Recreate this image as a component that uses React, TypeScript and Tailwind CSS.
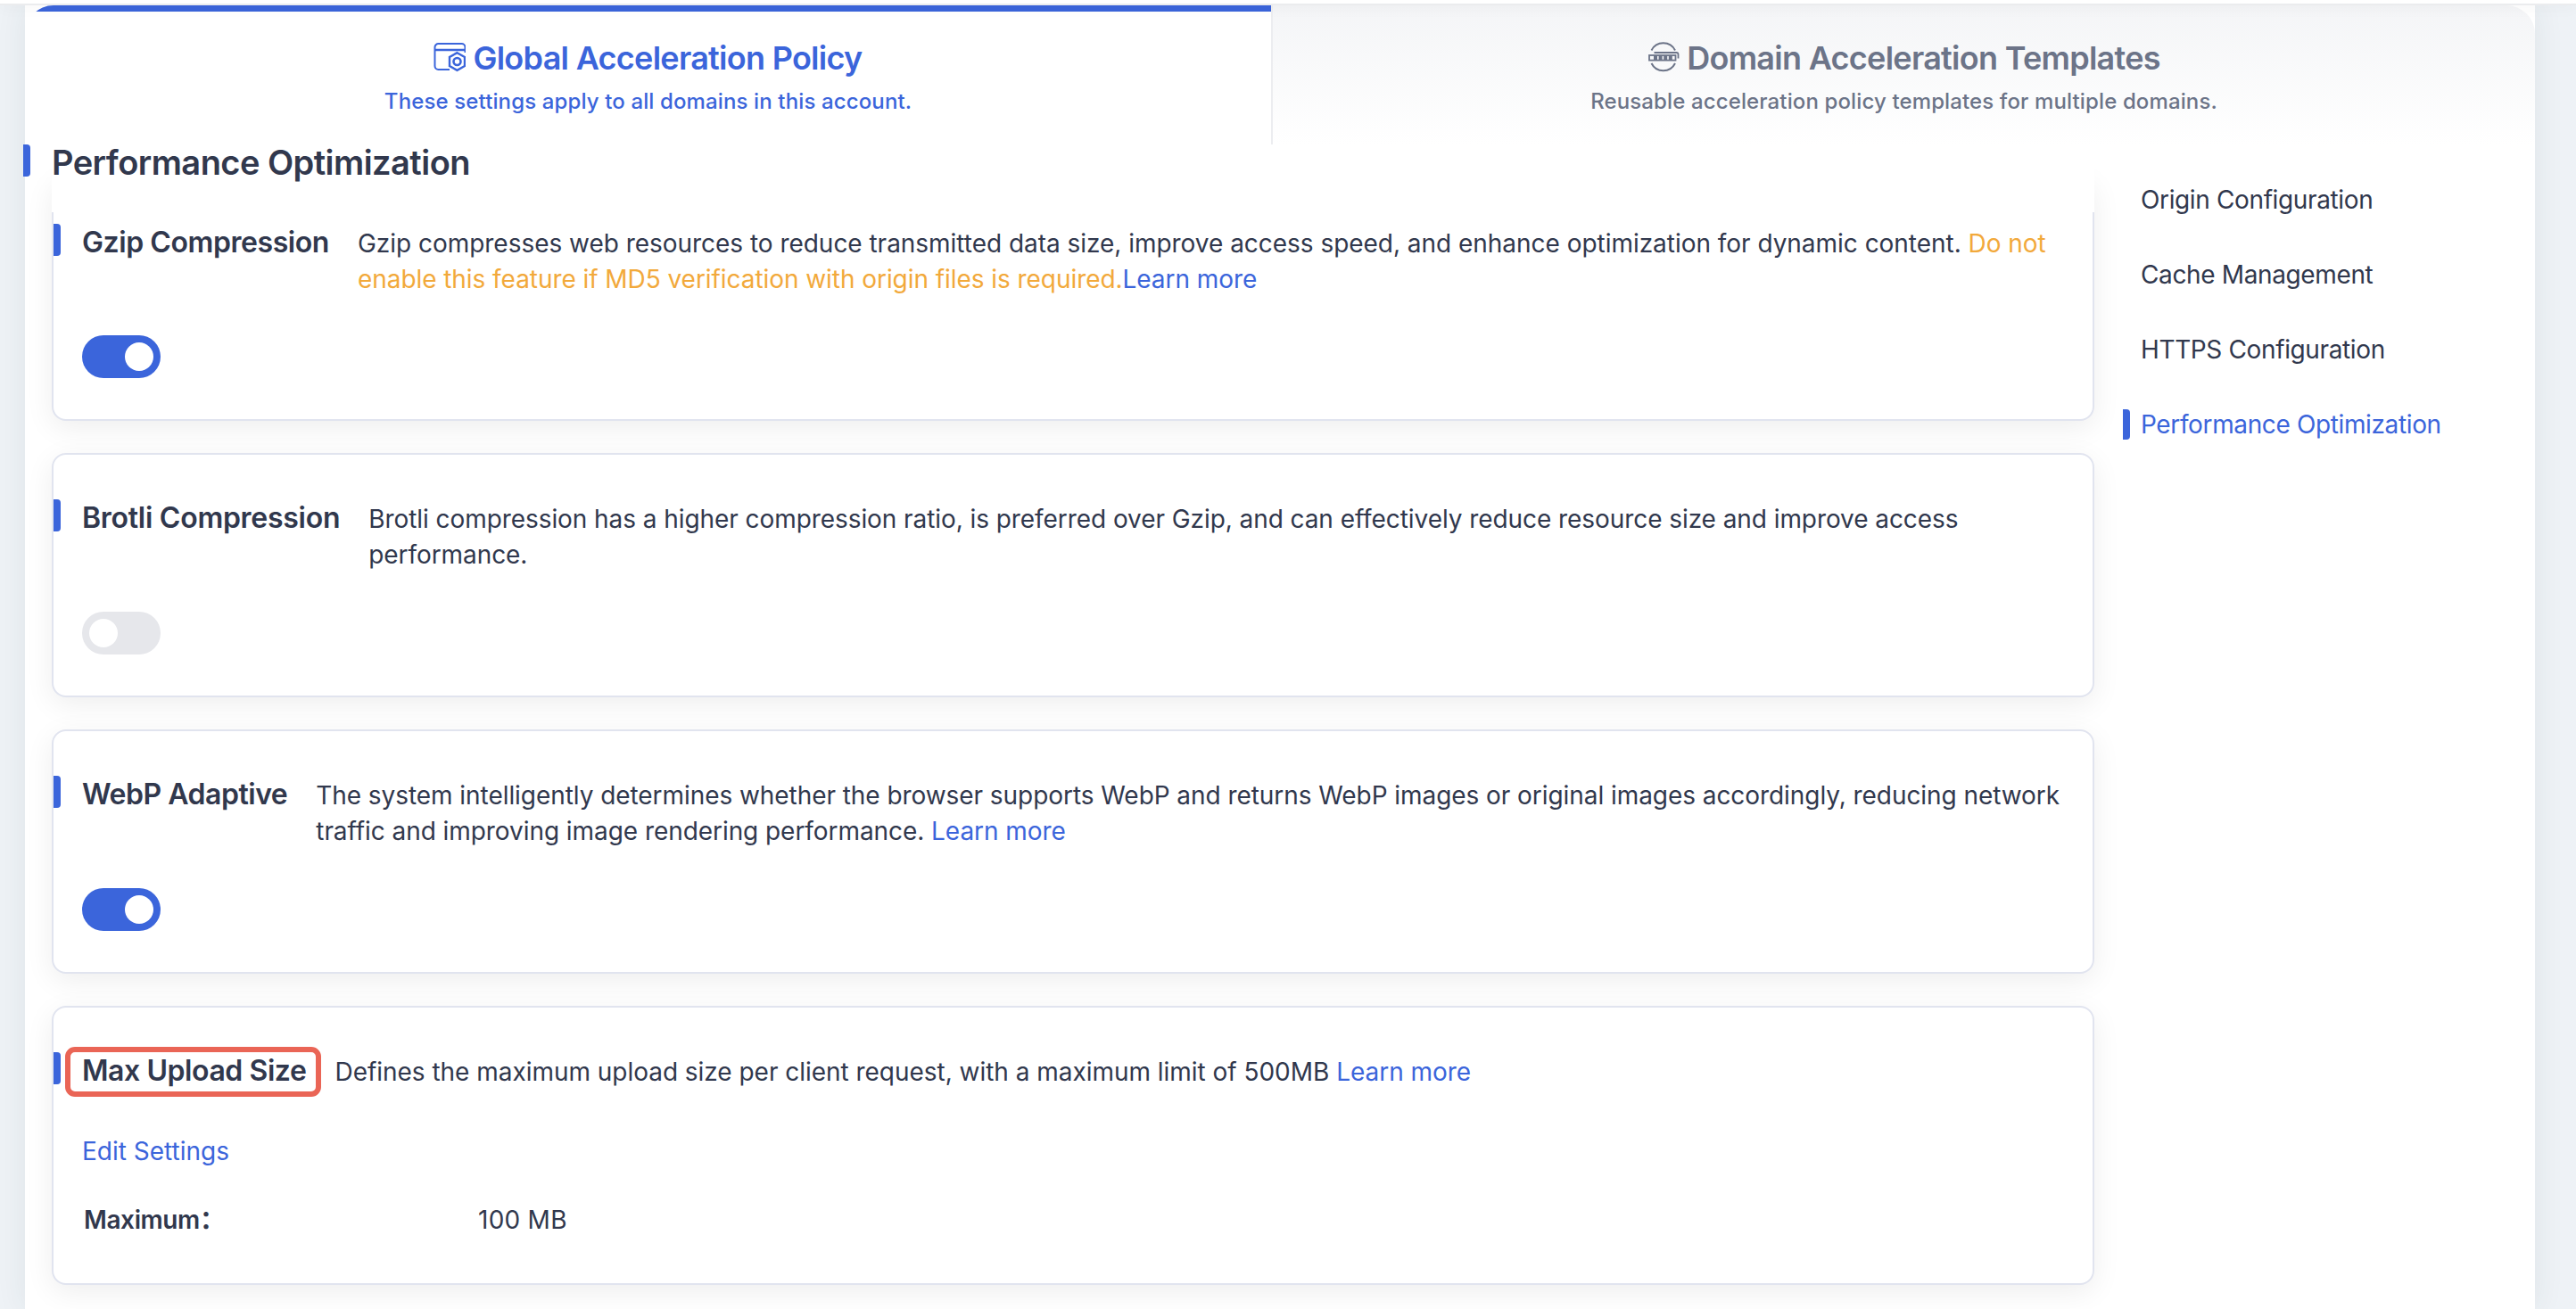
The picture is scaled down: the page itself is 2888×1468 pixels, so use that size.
import type { ReactNode } from "react";

function PolicyIcon() {
  return (
    <svg className="size-[36px]" viewBox="0 0 36 36" fill="none" stroke="currentColor" strokeWidth="2">
      <path d="M18 31H5.500a4 4 0 0 1-4-4V6a4 4 0 0 1 4-4h26a4 4 0 0 1 4 4v6" />
      <path d="M2 9h33" strokeWidth="2.600" />
      <path d="M26.500 12.200 35 17v10l-8.500 4.900L18 27V17z" strokeWidth="2.400" />
      <circle cx="26.500" cy="22" r="4" strokeWidth="2.600" />
    </svg>
  );
}

function TemplateIcon() {
  return (
    <svg className="size-[36px]" viewBox="0 0 36 36" fill="none" stroke="currentColor" strokeWidth="2">
      <path d="M4.500 9.500a14.800 14.800 0 0 1 26.500 0M4.500 24a14.800 14.800 0 0 0 26.500 0" />
      <path d="M7.500 12h25q2 0 2 2v4.500" strokeWidth="1.800" />
      <rect x="2" y="15" width="29.500" height="5.600" strokeWidth="1.800" />
      <path d="M7 17.800h21" strokeWidth="5" strokeDasharray="4 1.600" />
    </svg>
  );
}

function Switch({ checked }: { checked?: boolean }) {
  return (
    <div
      role="switch"
      aria-checked={!!checked}
      className={`mb-[46px] flex h-12 w-[88px] items-center rounded-full px-2 ${checked ? "justify-end bg-[#3b65db]" : "justify-start bg-[#e6e7eb]"}`}
    >
      <div className="size-8 rounded-full bg-white" />
    </div>
  );
}

function Link({ children }: { children: ReactNode }) {
  return <a className="text-[#3b65db]">{children}</a>;
}

type CardProps = {
  title: string;
  titleClass?: string;
  boxed?: boolean;
  desc: ReactNode;
  className: string;
  children: ReactNode;
};

function Card({ title, titleClass = "tracking-[-0.43px]", boxed, desc, className, children }: CardProps) {
  return (
    <section className={`flex flex-col justify-between rounded-2xl border-2 border-[#e1e4ef] bg-white shadow-[0_8px_32px_rgba(0,0,0,0.07)] ${className}`}>
      <div className="flex">
        <div className="h-9 w-2 shrink-0 rounded-r-[4px] bg-[#3b65db]" />
        <h3 className={`relative ml-6 shrink-0 pt-px text-[32px] leading-10 font-semibold whitespace-nowrap ${titleClass}`}>
          {title}
          {boxed && <span className="absolute -top-[6px] -left-[19px] h-[56px] w-[287px] rounded-[11px] border-[6px] border-[#ea6556]" />}
        </h3>
        <p className="ml-8 pt-[2px] leading-10 tracking-[-0.06px] whitespace-nowrap">{desc}</p>
      </div>
      <div className="pl-8">{children}</div>
    </section>
  );
}

const navItems = ["Origin Configuration", "Cache Management", "HTTPS Configuration", "Performance Optimization"];

export default function App() {
  return (
    <div className="h-[1468px] w-[2888px] overflow-hidden bg-[#eef2f6] font-['Inter','Noto_Sans_CJK_SC',sans-serif] text-[28px] text-[#31384d]">
      <div className="relative z-20 h-[6px] border-b-2 border-[#ebecee] bg-white shadow-[0_2px_16px_rgba(0,0,0,0.06)]" />
      <main className="mr-[46px] ml-[28px] h-[1462px] bg-white shadow-[0_0_32px_rgba(40,70,70,0.08)]">
        <div className="flex h-[156px] overflow-hidden rounded-t-[32px]">
          <div className="flex w-[1397px] flex-col items-center border-t-[7px] border-[#3b65db] bg-white pt-[28px] text-[#3b65db]">
            <div className="flex h-[48px] items-center gap-2">
              <PolicyIcon />
              <span className="text-[36px] leading-[48px] font-semibold tracking-[-0.72px]">Global Acceleration Policy</span>
            </div>
            <div className="mt-[9px] text-[24px] leading-8 font-medium tracking-[0.125px]">These settings apply to all domains in this account.</div>
          </div>
          <div className="flex flex-1 flex-col items-center border-l-2 border-[#ecedf0] bg-linear-to-b from-[#f4f5f7] to-white pt-[35px] text-[#6c7488]">
            <div className="flex h-[48px] items-center gap-2">
              <TemplateIcon />
              <span className="text-[36px] leading-[48px] font-semibold tracking-[-0.72px]">Domain Acceleration Templates</span>
            </div>
            <div className="mt-[9px] text-[24px] leading-8 font-medium tracking-[0.125px]">Reusable acceleration policy templates for multiple domains.</div>
          </div>
        </div>

        <div className="flex">
          <div className="ml-[30px] w-[2290px]">
            <div className="relative z-10 -mb-10 h-[76px] bg-white">
              <div className="-ml-8 flex">
                <div className="h-9 w-2 rounded-r-[4px] bg-[#3b65db]" />
                <h2 className="ml-6 text-[38px] leading-[40px] font-semibold tracking-[-0.54px]">Performance Optimization</h2>
              </div>
            </div>
            <div className="flex flex-col gap-9">
              <Card
                title="Gzip Compression"
                className="h-[274px] pt-[51px]"
                desc={
                  <>
                    <span className="tracking-[-0.03px]">
                      Gzip compresses web resources to reduce transmitted data size, improve access speed, and enhance optimization for dynamic content.{" "}
                    </span>
                    <span className="text-[#f2a93b]">
                      Do not
                      <br />
                      enable this feature if MD5 verification with origin files is required.
                    </span>
                    <Link>Learn more</Link>
                  </>
                }
              >
                <Switch checked />
              </Card>
              <Card
                title="Brotli Compression"
                titleClass="tracking-[-0.27px]"
                className="h-[274px] pt-[50px]"
                desc={
                  <span className="tracking-[-0.07px]">
                    Brotli compression has a higher compression ratio, is preferred over Gzip, and can effectively reduce resource size and improve access
                    <br />
                    performance.
                  </span>
                }
              >
                <Switch />
              </Card>
              <Card
                title="WebP Adaptive"
                titleClass="tracking-[-0.48px]"
                className="h-[274px] pt-[50px]"
                desc={
                  <>
                    The system intelligently determines whether the browser supports WebP and returns WebP images or original images accordingly, reducing network
                    <br />
                    traffic and improving image rendering performance. <Link>Learn more</Link>
                  </>
                }
              >
                <Switch checked />
              </Card>
              <Card
                title="Max Upload Size"
                boxed
                className="h-[313px] pt-[50px]"
                desc={
                  <span className="tracking-[-0.03px]">
                    Defines the maximum upload size per client request, with a maximum limit of 500MB <Link>Learn more</Link>
                  </span>
                }
              >
                <div className="leading-10">
                  <Link>Edit Settings</Link>
                </div>
                <div className="mt-[37px] mb-[51px] flex h-10 pl-[2px] leading-10">
                  <div className="w-[442px] font-semibold tracking-[-0.4px]">Maximum：</div>
                  <div className="tracking-[0.25px]">100 MB</div>
                </div>
              </Card>
            </div>
          </div>

          <nav className="ml-[32px] flex flex-col gap-11 pt-[42px] leading-10 tracking-[-0.37px]">
            {navItems.map((item, i) => (
              <div key={item} className={`flex items-center ${i === 3 ? "text-[#3b65db]" : ""}`}>
                <div className={`mr-3 h-[34px] w-2 rounded-r-[4px] ${i === 3 ? "bg-[#3b65db]" : ""}`} />
                {item}
              </div>
            ))}
          </nav>
        </div>
      </main>
    </div>
  );
}
